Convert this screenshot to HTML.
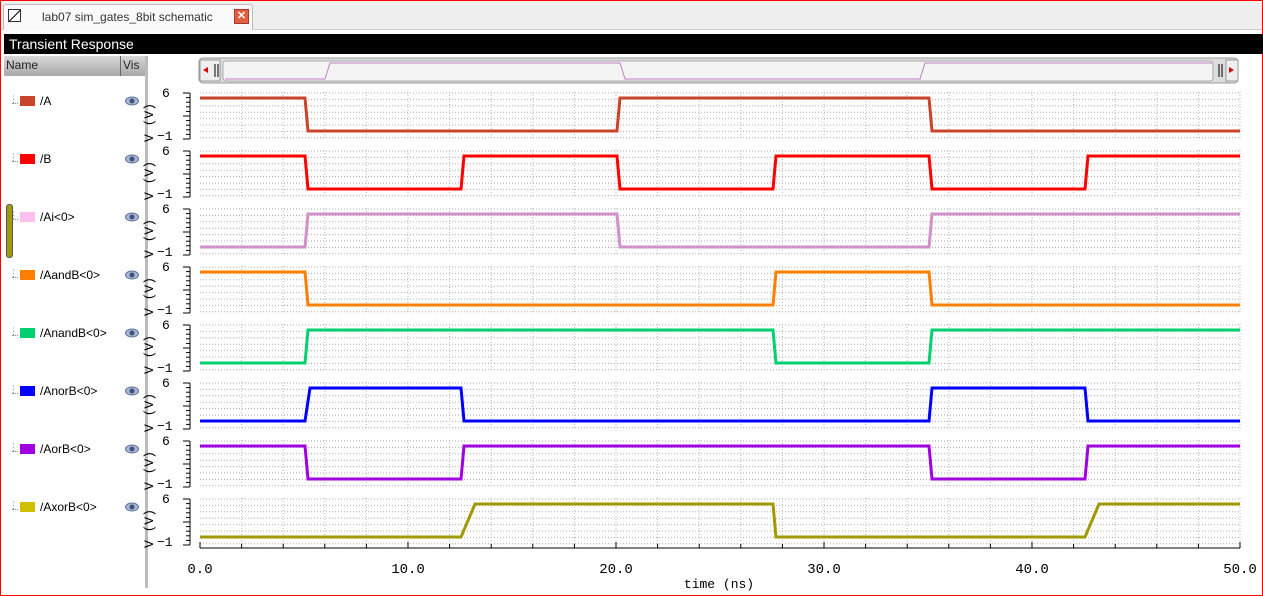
<!DOCTYPE html>
<html><head><meta charset="utf-8"><style>
body{margin:0;width:1263px;height:596px;overflow:hidden;background:#fff;font-family:"Liberation Sans",sans-serif;position:relative}
.frame{position:absolute;left:0;top:0;width:1261px;height:594px;border:1px solid #f00}
.tabbar{position:absolute;left:1px;top:1px;width:1261px;height:28px;background:#eee;border-bottom:1px solid #ccc}
.tab{position:absolute;left:2px;top:3px;width:248px;height:25px;background:#fafafa;border:1px solid #bbb;border-bottom:none;border-radius:3px 3px 0 0}
.title{position:absolute;left:4px;top:34px;width:1256px;height:20px;background:#000;color:#fff;font-size:14px;line-height:20px;padding-left:5px}
.left{position:absolute;left:4px;top:56px;width:141px;height:532px;background:#fff;border-right:3px solid #bbb}
.hdr{position:absolute;left:0;top:0;width:141px;height:20px;background:linear-gradient(#d8d8d8,#a8a8a8);font-size:12px;color:#222}
.row{position:absolute;left:0;font-size:12px;color:#000;height:14px;line-height:14px}
</style></head><body>
<div class="frame"></div>
<div class="tabbar"><div class="tab">
<div style="position:absolute;left:4px;top:4px;width:11px;height:11px;border:1px solid #333;background:#fff;overflow:hidden"><div style="position:absolute;left:-2px;top:5px;width:16px;height:1px;background:#000;transform:rotate(-45deg)"></div></div>
<span style="position:absolute;left:38px;top:5px;font-size:12px;color:#333">lab07 sim_gates_8bit schematic</span>
<div style="position:absolute;left:230px;top:4px;width:13px;height:13px;background:#e06040;border:1px solid #a33;color:#fff;font-size:11px;line-height:13px;text-align:center;font-weight:bold">✕</div>
</div></div>
<div class="title">Transient Response</div>
<div class="left"><div class="hdr"><span style="position:absolute;left:2px;top:2px">Name</span><span style="position:absolute;left:116px;top:0;height:20px;border-left:1px solid #666"></span><span style="position:absolute;left:119px;top:2px">Vis</span></div>
<div style="position:absolute;left:2px;top:148px;width:5px;height:52px;background:#a09a10;border:1px solid #555;border-radius:3px"></div>
<div id="rows"></div></div>
<svg id="plot" style="position:absolute;left:0;top:0" width="1263" height="596"></svg>
<script>
var sigs=[["/A","#c8442a","#c8442a",[1,5,0,20,1,35,0]],
["/B","#ff0000","#ff0000",[1,5,0,12.5,1,20,0,27.5,1,35,0,42.5,1]],
["/Ai<0>","#d090c8","#ffc0f0",[0,5,1,20,0,35,1]],
["/AandB<0>","#ff8000","#ff8000",[1,5,0,27.5,1,35,0]],
["/AnandB<0>","#00d070","#00d070",[0,5,1,27.5,0,35,1]],
["/AnorB<0>","#0000ff","#0000ff",[0,5,1,12.5,0,35,1,42.5,0]],
["/AorB<0>","#a000e0","#a000e0",[1,5,0,12.5,1,35,0,42.5,1]],
["/AxorB<0>","#a09a00","#d0c000",[0,12.5,1,27.5,0,42.5,1]]];
var rows=document.getElementById('rows'),s='';
var X=function(t){return 200+t*20.8};
s+='<rect x="199" y="58" width="1039" height="25" rx="4" fill="#ddd" stroke="#999"/>';
s+='<rect x="200" y="60" width="20" height="21" fill="#eee" stroke="#999"/><path d="M203 70l5-3v6z" fill="#d00"/><line x1="215" y1="64" x2="215" y2="77" stroke="#000"/><line x1="218" y1="64" x2="218" y2="77" stroke="#000"/>';
s+='<rect x="1226" y="60" width="12" height="21" fill="#eee" stroke="#999"/><path d="M1229 67l5 3-5 3z" fill="#d00"/><line x1="1219" y1="64" x2="1219" y2="77" stroke="#000"/><line x1="1222" y1="64" x2="1222" y2="77" stroke="#000"/>';
s+='<rect x="223" y="61" width="990" height="20" rx="3" fill="#f4f4f4" stroke="#aaa"/>';
s+='<path d="M225 79H325L330 63H620L625 79H920L925 63H1212" fill="none" stroke="#c080c0"/>';
for(var i=0;i<8;i++){var y0=92+i*58;var g=sigs[i];
 rows.innerHTML+='<div class="row" style="top:'+(38+i*58)+'px"><span style="position:absolute;left:5px;top:-2px;color:#888;font-size:9px">⋮</span><span style="position:absolute;left:8px;top:9px;width:6px;border-top:1px dotted #888"></span><span style="position:absolute;left:16px;top:2px;width:15px;height:10px;background:'+g[2]+'"></span><span style="position:absolute;left:36px;top:0;white-space:nowrap">'+g[0]+'</span><svg style="position:absolute;left:121px;top:1px" width="14" height="12"><ellipse cx="7" cy="6" rx="6.5" ry="4" fill="#a8b8d0" stroke="#6070a0"/><circle cx="7" cy="6" r="2.5" fill="#405080"/></svg></div>';
 for(var k=0;k<8;k++){s+='<line x1="200" x2="1240" y1="'+(y0+1+k*6.4)+'" y2="'+(y0+1+k*6.4)+'" stroke="#aaa" stroke-dasharray="1 2"/>';}
 for(var t=2;t<=50;t+=2){s+='<line x1="'+X(t)+'" x2="'+X(t)+'" y1="'+y0+'" y2="'+(y0+46)+'" stroke="#bbb" stroke-dasharray="1 2"/>';}
 s+='<line x1="190" x2="190" y1="'+(y0+1)+'" y2="'+(y0+47)+'" stroke="#000"/>';
 for(var k=0;k<11;k++){var yy=y0+1+k*4.6;s+='<line x1="'+(k%5==0?183:186)+'" x2="190" y1="'+yy+'" y2="'+yy+'" stroke="#000"/>';}
 s+='<text x="162" y="'+(y0+5)+'" font-family="Liberation Mono" font-size="13">6</text><text x="157" y="'+(y0+48)+'" font-family="Liberation Mono" font-size="13">−1</text>';
 s+='<text transform="translate(153,'+(y0+50)+') rotate(-90)" font-family="Liberation Mono" font-size="13">V (V)</text>';
 var hi=y0+6,lo=y0+39,v=g[3],cur=v[0],d='M200 '+(cur?hi:lo);
 for(var j=1;j<v.length;j+=2){var tx=X(v[j])+1;var w=(i==7&&v[j+1]==1)?14:(i==5&&v[j+1]==1&&v[j]==5?5:3);d+='H'+tx+'L'+(tx+w)+' '+(v[j+1]?hi:lo);cur=v[j+1];}
 d+='H1240';
 s+='<path d="'+d+'" fill="none" stroke="'+g[1]+'" stroke-width="3"/>';
}
s+='<line x1="200" x2="1240" y1="548" y2="548" stroke="#000"/>';
for(var t=0;t<=50;t+=2){var big=t%10==0;s+='<line x1="'+X(t)+'" x2="'+X(t)+'" y1="'+(big?542:544)+'" y2="548" stroke="#000"/>';}
for(var t=0;t<=50;t+=10){s+='<text x="'+X(t)+'" y="573" text-anchor="middle" font-family="Liberation Mono" font-size="14">'+t+'.0</text>';}
s+='<text x="719" y="588" text-anchor="middle" font-family="Liberation Mono" font-size="13">time (ns)</text>';
s+='<rect x="1241" y="85" width="19" height="460" fill="#fff"/>';
document.getElementById('plot').innerHTML=s;
</script>
</body></html>
